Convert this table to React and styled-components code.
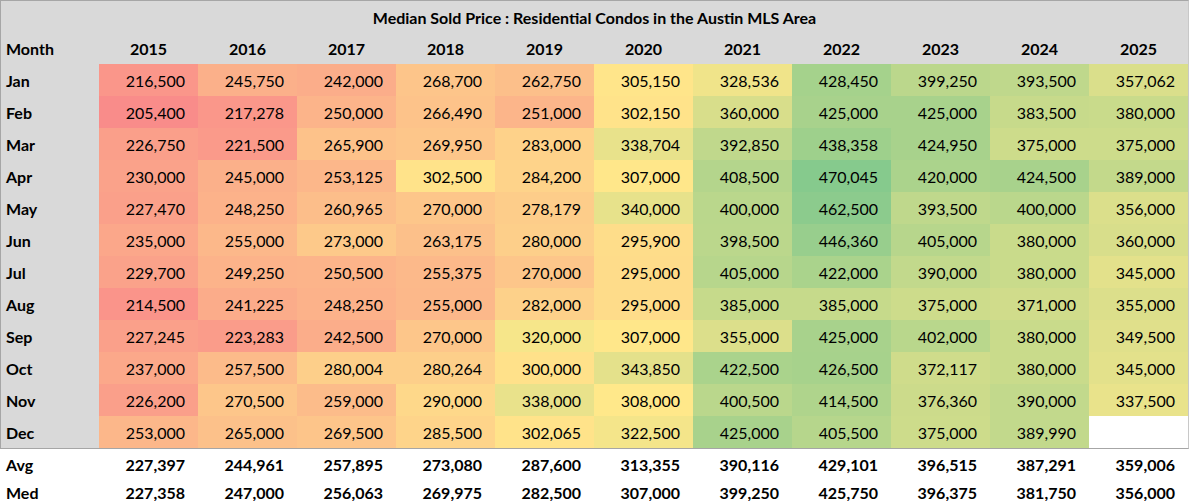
import React from "react";
import styled, { createGlobalStyle } from "styled-components";

const GlobalStyle = createGlobalStyle`
  html, body { margin: 0; padding: 0; background: #ffffff; }
  body { width: 1189px; height: 501px; overflow: hidden; font-family: Lato, "Open Sans", sans-serif; color: #000; }
`;

const YEARS = [2015, 2016, 2017, 2018, 2019, 2020, 2021, 2022, 2023, 2024, 2025];
const MONTHS = ["Jan", "Feb", "Mar", "Apr", "May", "Jun", "Jul", "Aug", "Sep", "Oct", "Nov", "Dec"];

const DATA = {
  2015: [216500, 205400, 226750, 230000, 227470, 235000, 229700, 214500, 227245, 237000, 226200, 253000],
  2016: [245750, 217278, 221500, 245000, 248250, 255000, 249250, 241225, 223283, 257500, 270500, 265000],
  2017: [242000, 250000, 265900, 253125, 260965, 273000, 250500, 248250, 242500, 280004, 259000, 269500],
  2018: [268700, 266490, 269950, 302500, 270000, 263175, 255375, 255000, 270000, 280264, 290000, 285500],
  2019: [262750, 251000, 283000, 284200, 278179, 280000, 270000, 282000, 320000, 300000, 338000, 302065],
  2020: [305150, 302150, 338704, 307000, 340000, 295900, 295000, 295000, 307000, 343850, 308000, 322500],
  2021: [328536, 360000, 392850, 408500, 400000, 398500, 405000, 385000, 355000, 422500, 400500, 425000],
  2022: [428450, 425000, 438358, 470045, 462500, 446360, 422000, 385000, 425000, 426500, 414500, 405500],
  2023: [399250, 425000, 424950, 420000, 393500, 405000, 390000, 375000, 402000, 372117, 376360, 375000],
  2024: [393500, 383500, 375000, 424500, 400000, 380000, 380000, 371000, 380000, 380000, 390000, 389990],
  2025: [357062, 380000, 375000, 389000, 356000, 360000, 345000, 355000, 349500, 345000, 337500, null],
};

const AVG = ["227,397", "244,961", "257,895", "273,080", "287,600", "313,355", "390,116", "429,101", "396,515", "387,291", "359,006"];
const MED = ["227,358", "247,000", "256,063", "269,975", "282,500", "307,000", "399,250", "425,750", "396,375", "381,750", "356,000"];

const allValues = YEARS.flatMap((y) => DATA[y]).filter((v) => v != null).sort((a, b) => a - b);
const MIN = allValues[0];
const MAX = allValues[allValues.length - 1];
const MID = (() => {
  const n = allValues.length;
  return n % 2 ? allValues[(n - 1) / 2] : (allValues[n / 2 - 1] + allValues[n / 2]) / 2;
})();

const RED = [249, 140, 138];
const YELLOW = [255, 232, 138];
const GREEN = [134, 202, 141];

const mix = (a, b, t) => a.map((c, i) => Math.round(c + (b[i] - c) * t));
const scaleColor = (v) => {
  if (v == null) return "#ffffff";
  let c;
  if (v <= MID) c = mix(RED, YELLOW, (v - MIN) / (MID - MIN));
  else c = mix(YELLOW, GREEN, (v - MID) / (MAX - MID));
  return `rgb(${c[0]}, ${c[1]}, ${c[2]})`;
};

const fmt = (v) => (v == null ? "" : v.toLocaleString("en-US"));

const Page = styled.div`
  width: 1189px;
`;

const Sheet = styled.div`
  box-sizing: border-box;
  width: 1189px;
  border: 1px solid #a6a6a6;
  border-right-color: #c8c8c8;
  background: #d9d9d9;
  display: grid;
  grid-template-columns: 98px repeat(11, 99px);
  grid-auto-rows: 32px;
  grid-template-rows: 31px;
`;

const Title = styled.div`
  grid-column: 1 / -1;
  display: flex;
  align-items: center;
  justify-content: center;
  font-weight: 700;
  font-size: 16px;
  padding-top: 1px;
`;

const HeadCell = styled.div`
  display: flex;
  align-items: center;
  justify-content: ${(p) => (p.$left ? "flex-start" : "center")};
  padding-left: ${(p) => (p.$left ? "5px" : "0")};
  font-weight: 700;
  font-size: 16px;
`;

const LabelCell = styled.div`
  display: flex;
  align-items: center;
  padding-left: 5px;
  font-weight: 700;
  font-size: 16px;
`;

const DataCell = styled.div`
  display: flex;
  align-items: center;
  justify-content: flex-end;
  padding-right: 13px;
  font-size: 16px;
  background: ${(p) => p.$bg};
`;

const Summary = styled.div`
  box-sizing: border-box;
  width: 1189px;
  padding: 1px 0 0 1px;
  display: grid;
  grid-template-columns: 98px repeat(11, 99px);
  grid-auto-rows: 28px;
  background: #ffffff;
`;

const SumCell = styled.div`
  display: flex;
  align-items: center;
  justify-content: flex-end;
  padding-right: 13px;
  font-size: 16px;
  font-weight: 700;
`;

export default function App() {
  return (
    <Page>
      <GlobalStyle />
      <Sheet>
        <Title>Median Sold Price : Residential Condos in the Austin MLS Area</Title>
        <HeadCell $left>Month</HeadCell>
        {YEARS.map((y) => (
          <HeadCell key={y}>{y}</HeadCell>
        ))}
        {MONTHS.map((m, mi) => (
          <React.Fragment key={m}>
            <LabelCell>{m}</LabelCell>
            {YEARS.map((y) => (
              <DataCell key={y} $bg={scaleColor(DATA[y][mi])}>
                {fmt(DATA[y][mi])}
              </DataCell>
            ))}
          </React.Fragment>
        ))}
      </Sheet>
      <Summary>
        <LabelCell>Avg</LabelCell>
        {AVG.map((v, i) => (
          <SumCell key={i}>{v}</SumCell>
        ))}
        <LabelCell>Med</LabelCell>
        {MED.map((v, i) => (
          <SumCell key={i}>{v}</SumCell>
        ))}
      </Summary>
    </Page>
  );
}
